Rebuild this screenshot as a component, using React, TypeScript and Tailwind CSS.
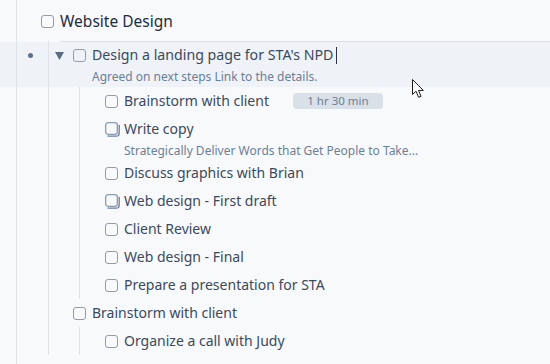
import React from "react";

const font = { fontFamily: '"Noto Sans", "Open Sans", sans-serif' };

function Box() {
  return (
    <div className="w-[13px] h-[13px] shrink-0 rounded-[3px] border-[1.3px] border-[#8e9cb1]" />
  );
}

function StackBox() {
  return (
    <svg width="15" height="15" viewBox="0 0 15 15" className="shrink-0 -mr-[2px]">
      <rect x="0.65" y="0.65" width="11.7" height="11.7" rx="2.6" fill="none" stroke="#8e9cb1" strokeWidth="1.3" />
      <path d="M2.5 14.2 H11 Q14.2 14.2 14.2 11 V2.8" fill="none" stroke="#6f7f95" strokeWidth="1.3" />
    </svg>
  );
}

function Row({ label, stack, children }: { label: string; stack?: boolean; children?: React.ReactNode }) {
  return (
    <div className="h-[28px] flex items-center pl-[25px] gap-[6px] text-[14px] text-[#3b4a5d]">
      {stack ? <StackBox /> : <Box />}
      <span className="whitespace-nowrap -mt-[2px]">{label}</span>
      {children}
    </div>
  );
}

function Sub({ text, pl }: { text: string; pl: string }) {
  return (
    <div className={`h-[16px] leading-[16px] text-[12px] text-[#6b7f99] whitespace-nowrap ${pl}`}>{text}</div>
  );
}

export default function App() {
  return (
    <div className="relative isolate w-[550px] h-[364px] overflow-hidden bg-[#f8f9fb]" style={font}>
      <div className="ml-4 h-full border-l border-[#dfe3e8]">
        {/* Website Design */}
        <div className="h-[41px] pt-[2px] flex items-center pl-[24px] gap-[6px]">
          <Box />
          <span className="text-[15.5px] font-normal text-[#1f2d40]">Website Design</span>
        </div>
        <div className="ml-[31px] border-l border-[#dfe3e8]">
          {/* highlighted row */}
          <div className="relative pt-[1px] pb-[2px]">
            <div className="absolute left-[11px] right-0 top-0 h-px bg-[#dde1e6]" />
            <div className="absolute -left-[49px] -right-0 top-[1px] bottom-0 -z-10 bg-[#eff2f6]" />
            <div className="absolute -left-[21px] top-[12px] w-[5px] h-[5px] rounded-full bg-[#5f7088]" />
            <div className="h-[27px] flex items-center pl-[6px]">
              <svg width="9" height="8" viewBox="0 0 9 8" className="shrink-0">
                <path d="M0 0 H9 L4.5 8 Z" fill="#5b6c82" />
              </svg>
              <div className="ml-[9px]">
                <Box />
              </div>
              <span className="ml-[6px] text-[14.2px] text-[#3b4a5d] whitespace-nowrap -mt-[1px]">Design a landing page for STA's NPD</span>
              <span className="ml-[3px] w-px h-[17px] bg-[#2b3440]" />
            </div>
            <Sub text="Agreed on next steps Link to the details." pl="pl-[43px]" />
          </div>
          {/* children of Design */}
          <div className="ml-[30px] border-l border-[#dfe3e8]">
            <Row label="Brainstorm with client">
              <span className="ml-[18px] h-[16px] w-[90px] rounded-[4px] bg-[#d9e0e8] text-[11.5px] leading-[16px] text-[#6b7f99] text-center">
                1 hr 30 min
              </span>
            </Row>
            <Row label="Write copy" stack />
            <Sub text="Strategically Deliver Words that Get People to Take..." pl="pl-[44px]" />
            <Row label="Discuss graphics with Brian" />
            <Row label="Web design - First draft" stack />
            <Row label="Client Review" />
            <Row label="Web design - Final" />
            <Row label="Prepare a presentation for STA" />
          </div>
          <div className="h-[28px] flex items-center pl-[24px] gap-[6px] text-[14px] text-[#3b4a5d]">
            <Box />
            <span className="-mt-[2px]">Brainstorm with client</span>
          </div>
          <div className="ml-[30px] border-l border-[#dfe3e8]">
            <Row label="Organize a call with Judy" />
          </div>
        </div>
      </div>
      {/* mouse pointer */}
      <svg width="14" height="20" viewBox="0 0 14 20" className="absolute left-[412px] top-[79px]">
        <path d="M0.5 0.5 V15.5 L4 12.2 L6.6 18.3 L9 17.3 L6.5 11.4 H11.3 Z" fill="#fff" stroke="#1b1b1b" strokeWidth="1" strokeLinejoin="round" />
      </svg>
    </div>
  );
}
